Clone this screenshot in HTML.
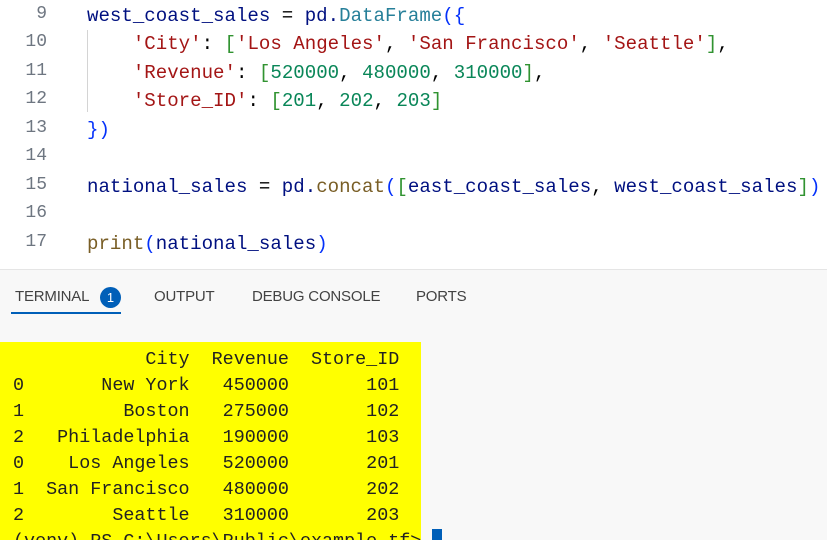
<!DOCTYPE html><html><head><style>
body{margin:0;width:827px;height:539px;overflow:hidden;background:#fff;position:relative;font-family:"Liberation Mono",monospace}
.code{position:absolute;left:0;top:0;width:827px;height:269px;background:#fff}
.ln{position:absolute;left:0;width:47px;text-align:right;color:#6e7681;font-size:18px}
.l{position:absolute;left:87px;font-size:19.1px;white-space:pre;color:#001080;line-height:28px}
.s{color:#a31515}.n{color:#098658}.f{color:#795e26}.b{color:#0431fa}.p{color:#000}.g{color:#319331}
.guide{position:absolute;left:87px;top:30px;height:82px;border-left:1px solid #d4d4d4}
.term{position:absolute;left:0;top:269px;width:827px;height:270px;background:#f8f8f8;border-top:1px solid #e5e5e5;overflow:hidden}
.tab{position:absolute;top:18px;font-family:"Liberation Sans",sans-serif;font-size:15px;color:#424242;letter-spacing:-0.2px}
.badge{position:absolute;left:100px;top:17px;width:21px;height:21px;border-radius:50%;background:#005fb8;color:#fff;font-family:"Liberation Sans",sans-serif;font-size:13px;text-align:center;line-height:21px}
.ul{position:absolute;left:11px;top:42px;width:110px;height:2px;background:#005fb8}
.out{position:absolute;left:0;top:72px;width:421px;height:200px;background:#ffff00}
.o{position:absolute;left:13px;font-size:18.4px;white-space:pre;color:#222;line-height:26px}
</style></head><body>
<div class="code">
<div class="guide"></div>
<div class="ln" style="top:4px">9</div><div class="l" style="top:2px">west_coast_sales <span class="p">=</span> pd.<span style="color:#267f99">DataFrame</span><span class="b">({</span></div>
<div class="ln" style="top:32px">10</div><div class="l" style="top:30px">    <span class="s">'City'</span><span class="p">:</span> <span class="g">[</span><span class="s">'Los Angeles'</span><span class="p">,</span> <span class="s">'San Francisco'</span><span class="p">,</span> <span class="s">'Seattle'</span><span class="g">]</span><span class="p">,</span></div>
<div class="ln" style="top:61px">11</div><div class="l" style="top:59px">    <span class="s">'Revenue'</span><span class="p">:</span> <span class="g">[</span><span class="n">520000</span><span class="p">,</span> <span class="n">480000</span><span class="p">,</span> <span class="n">310000</span><span class="g">]</span><span class="p">,</span></div>
<div class="ln" style="top:89px">12</div><div class="l" style="top:87px">    <span class="s">'Store_ID'</span><span class="p">:</span> <span class="g">[</span><span class="n">201</span><span class="p">,</span> <span class="n">202</span><span class="p">,</span> <span class="n">203</span><span class="g">]</span></div>
<div class="ln" style="top:118px">13</div><div class="l b" style="top:116px">})</div>
<div class="ln" style="top:146px">14</div>
<div class="ln" style="top:175px">15</div><div class="l" style="top:173px">national_sales <span class="p">=</span> pd.<span class="f">concat</span><span class="b">(</span><span class="g">[</span>east_coast_sales<span class="p">,</span> west_coast_sales<span class="g">]</span><span class="b">)</span></div>
<div class="ln" style="top:203px">16</div>
<div class="ln" style="top:232px">17</div><div class="l" style="top:230px"><span class="f">print</span><span class="b">(</span>national_sales<span class="b">)</span></div>
</div>
<div class="term">
<div class="tab" style="left:15px">TERMINAL</div>
<div class="badge">1</div>
<div class="ul"></div>
<div class="tab" style="left:154px">OUTPUT</div>
<div class="tab" style="left:252px">DEBUG CONSOLE</div>
<div class="tab" style="left:416px">PORTS</div>
<div class="out"></div>
<div class="o" style="top:77px">            City  Revenue  Store_ID</div>
<div class="o" style="top:103px">0       New York   450000       101</div>
<div class="o" style="top:129px">1         Boston   275000       102</div>
<div class="o" style="top:155px">2   Philadelphia   190000       103</div>
<div class="o" style="top:181px">0    Los Angeles   520000       201</div>
<div class="o" style="top:207px">1  San Francisco   480000       202</div>
<div class="o" style="top:233px">2        Seattle   310000       203</div>
<div class="o" style="top:259px">(venv) PS C:\Users\Public\example.tf&gt;</div>
<div style="position:absolute;left:432px;top:259px;width:10px;height:20px;background:#005fb8"></div>
</div>
</body></html>
